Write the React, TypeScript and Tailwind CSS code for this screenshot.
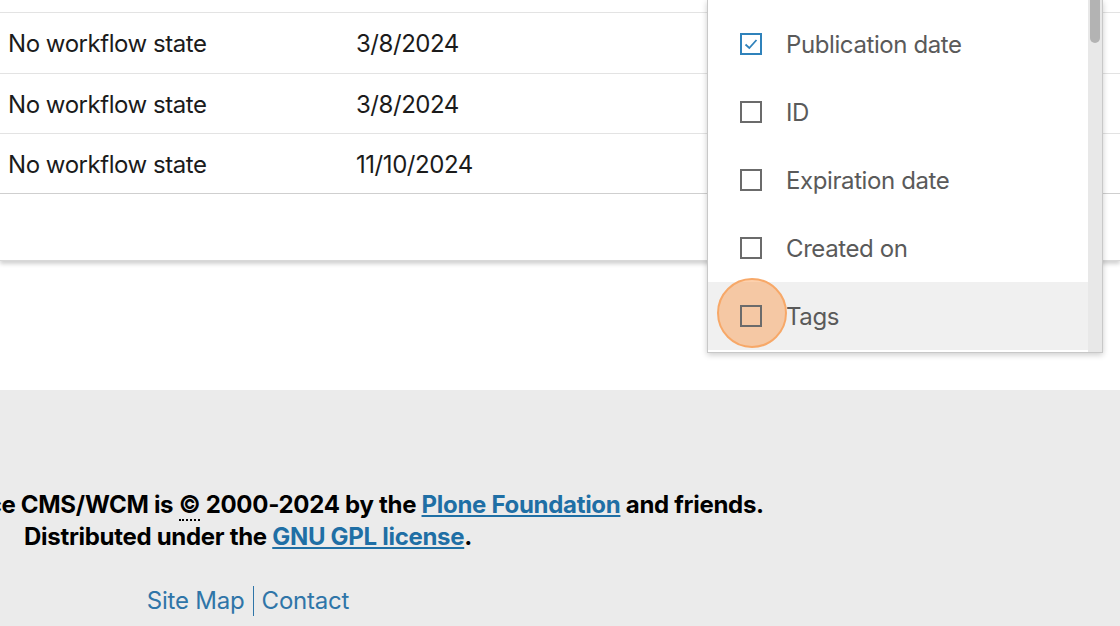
import React from "react";

const rows = [
  { state: "No workflow state", date: "3/8/2024", h: "h-[61px]" },
  { state: "No workflow state", date: "3/8/2024", h: "h-[60px]" },
  { state: "No workflow state", date: "11/10/2024", h: "h-[60px]" },
];

const items = [
  { label: "Publication date", checked: true },
  { label: "ID", checked: false },
  { label: "Expiration date", checked: false },
  { label: "Created on", checked: false },
  { label: "Tags", checked: false, hover: true },
];

function Checkbox({ checked }: { checked: boolean }) {
  if (checked) {
    return (
      <div className="w-[22px] h-[22px] border-2 border-[#2f82bb] flex items-center justify-center shrink-0">
        <svg width="16" height="16" viewBox="0 0 16 16">
          <path d="M2.5 8.5 L6.3 12 L13.5 4" fill="none" stroke="#2f82bb" strokeWidth="1.8" />
        </svg>
      </div>
    );
  }
  return <div className="w-[22px] h-[22px] border-2 border-[#6b6b6b] shrink-0" />;
}

export default function App() {
  return (
    <div
      className="relative w-[1120px] h-[626px] overflow-hidden bg-white"
      style={{ fontFamily: "Inter, 'Noto Sans', sans-serif" }}
    >
      {/* Table area */}
      <div className="h-[390px]">
        <div className="h-[261px] bg-white shadow-[0_3px_4px_rgba(0,0,0,0.18)] border-b border-[#d8d8d8]">
          <div className="h-[13px] border-b border-[#e3e3e3]" />
          {rows.map((r, i) => (
            <div
              key={i}
              className={`flex items-center ${r.h} pt-[2px] border-b ${i === rows.length - 1 ? "border-[#cfcfcf]" : "border-[#e3e3e3]"} text-[24px] text-[#1b1b1b] tracking-[-0.45px]`}
            >
              <div className="w-[356px] pl-[8px]">{r.state}</div>
              <div>{r.date}</div>
            </div>
          ))}
        </div>
      </div>

      {/* Dropdown */}
      <div className="absolute left-[707px] top-0 w-[396px] h-[353px] bg-white border border-t-0 border-[#c8c8c8] shadow-[0_2px_6px_rgba(0,0,0,0.2)] flex">
        <div className="flex-1 pt-[10px]">
          {items.map((it, i) => (
            <div
              key={i}
              className={`relative flex items-center h-[68px] pl-[32px] gap-[24px] ${it.hover ? "bg-[#f0f0f0]" : ""}`}
            >
              {it.hover && (
                <div className="absolute left-[9px] top-[-4px] w-[70px] h-[70px] rounded-full bg-[rgba(251,150,70,0.45)] border-2 border-[#f7a868]" />
              )}
              <div className="relative">
                <Checkbox checked={it.checked} />
              </div>
              <span className="relative text-[24px] text-[#5a5a5a] tracking-[-0.4px] pt-[1px]">{it.label}</span>
            </div>
          ))}
        </div>
        <div className="w-[14px] bg-[#e8e8e8] relative">
          <div className="absolute left-[2px] top-0 w-[10px] h-[43px] rounded-b-full bg-[#b3b3b3]" />
        </div>
      </div>

      {/* Footer */}
      <div className="h-[236px] bg-[#ebebeb] pt-[99px]">
        <div className="w-[1200px] ml-[-352px] flex flex-col items-center">
          <p className="text-[24px] font-bold text-black leading-[32px] tracking-[-0.3px] whitespace-nowrap">
            The Plone® Open Source CMS/WCM is{" "}
            <abbr className="no-underline border-b-2 border-dotted border-black" title="Copyright">©</abbr>{" "}
            2000-2024 by the{" "}
            <a className="text-[#1f6fa5] underline underline-offset-2" href="#">Plone Foundation</a>{" "}
            and friends.
          </p>
          <p className="text-[24px] font-bold text-black leading-[32px] tracking-[-0.3px] whitespace-nowrap">
            Distributed under the{" "}
            <a className="text-[#1f6fa5] underline underline-offset-2" href="#">GNU GPL license</a>.
          </p>
          <div className="flex items-center mt-[30px] text-[24px] text-[#2f75a8] tracking-[-0.2px]">
            <a href="#" className="pr-[8px]">Site Map</a>
            <div className="w-px h-[30px] bg-[#2f75a8]" />
            <a href="#" className="pl-[8px]">Contact</a>
          </div>
        </div>
      </div>
    </div>
  );
}
